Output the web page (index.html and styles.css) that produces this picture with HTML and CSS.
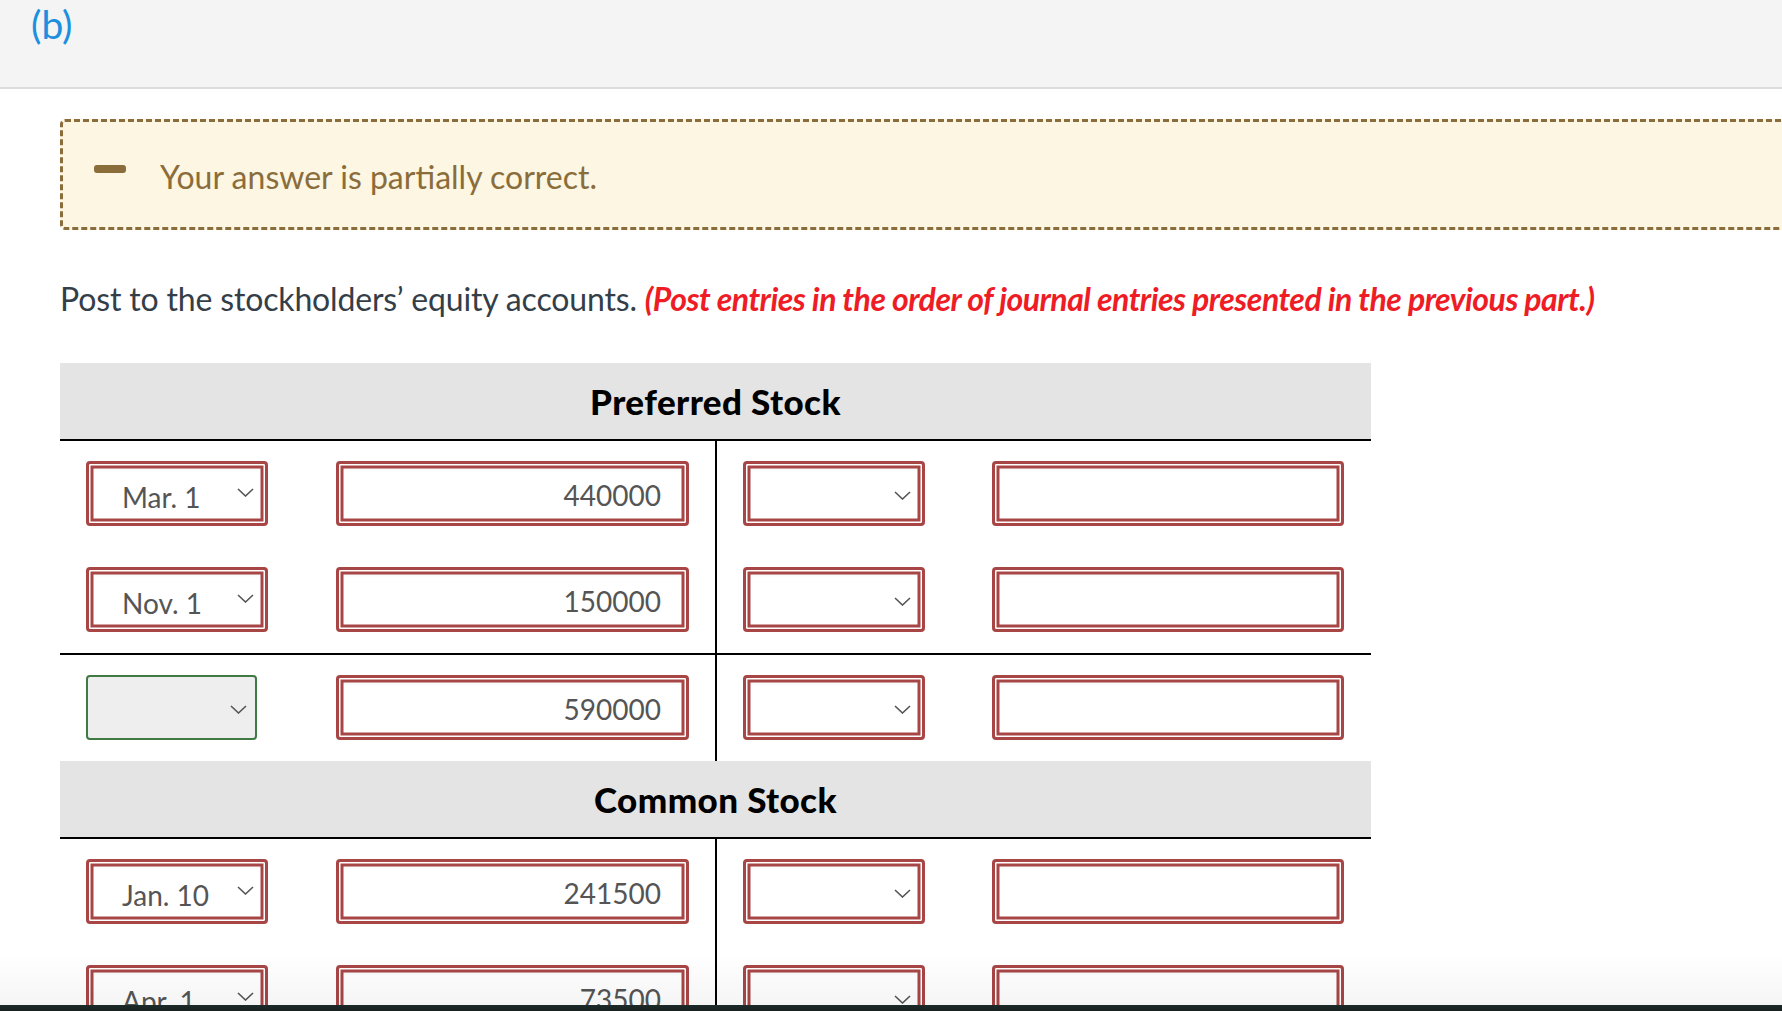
FILE: index.html
```html
<!DOCTYPE html>
<html lang="en">
<head>
<meta charset="utf-8">
<title>Part (b)</title>
<link rel="stylesheet" href="styles.css">
</head>
<body>
<header class="topbar"><span class="part-label">(b)</span></header>
<main class="content">
  <div class="alert">
    <span class="alert-icon"></span>
    <span class="alert-text">Your answer is partially correct.</span>
  </div>
  <p class="instruction">Post to the stockholders’ equity accounts. <em class="note">(Post entries in the order of journal entries presented in the previous part.)</em></p>

  <section class="account">
    <div class="acc-head">Preferred Stock</div>
    <div class="acc-row">
      <div class="half half-left">
        <div class="field select wrong"><span class="sel-text">Mar. 1</span><svg class="chev" viewBox="0 0 17 9"><path d="M1 1l7.5 7 7.5-7"/></svg></div>
        <input class="field amount wrong" value="440000">
      </div>
      <div class="half">
        <div class="field select wrong"><span class="sel-text"></span><svg class="chev" viewBox="0 0 17 9"><path d="M1 1l7.5 7 7.5-7"/></svg></div>
        <input class="field amount wide wrong" value="">
      </div>
    </div>
    <div class="acc-row">
      <div class="half half-left">
        <div class="field select wrong"><span class="sel-text">Nov. 1</span><svg class="chev" viewBox="0 0 17 9"><path d="M1 1l7.5 7 7.5-7"/></svg></div>
        <input class="field amount wrong" value="150000">
      </div>
      <div class="half">
        <div class="field select wrong"><span class="sel-text"></span><svg class="chev" viewBox="0 0 17 9"><path d="M1 1l7.5 7 7.5-7"/></svg></div>
        <input class="field amount wide wrong" value="">
      </div>
    </div>
    <div class="acc-row total">
      <div class="half half-left">
        <div class="field select ok"><span class="sel-text"></span><svg class="chev" viewBox="0 0 17 9"><path d="M1 1l7.5 7 7.5-7"/></svg></div>
        <input class="field amount wrong" value="590000">
      </div>
      <div class="half">
        <div class="field select wrong"><span class="sel-text"></span><svg class="chev" viewBox="0 0 17 9"><path d="M1 1l7.5 7 7.5-7"/></svg></div>
        <input class="field amount wide wrong" value="">
      </div>
    </div>
  </section>

  <section class="account">
    <div class="acc-head">Common Stock</div>
    <div class="acc-row">
      <div class="half half-left">
        <div class="field select wrong"><span class="sel-text">Jan. 10</span><svg class="chev" viewBox="0 0 17 9"><path d="M1 1l7.5 7 7.5-7"/></svg></div>
        <input class="field amount wrong" value="241500">
      </div>
      <div class="half">
        <div class="field select wrong"><span class="sel-text"></span><svg class="chev" viewBox="0 0 17 9"><path d="M1 1l7.5 7 7.5-7"/></svg></div>
        <input class="field amount wide wrong" value="">
      </div>
    </div>
    <div class="acc-row">
      <div class="half half-left">
        <div class="field select wrong"><span class="sel-text">Apr. 1</span><svg class="chev" viewBox="0 0 17 9"><path d="M1 1l7.5 7 7.5-7"/></svg></div>
        <input class="field amount wrong" value="73500">
      </div>
      <div class="half">
        <div class="field select wrong"><span class="sel-text"></span><svg class="chev" viewBox="0 0 17 9"><path d="M1 1l7.5 7 7.5-7"/></svg></div>
        <input class="field amount wide wrong" value="">
      </div>
    </div>
  </section>
</main>
<div class="screen-edge"></div>
</body>
</html>
```

FILE: styles.css
```css
html, body {
  margin: 0;
  padding: 0;
  overflow: hidden;
  background: #fff;
}
body {
  font-family: Lato, "Open Sans", "Liberation Sans", sans-serif;
  color: #343e48;
}
.topbar {
  height: 87px;
  background: #f4f4f4;
  border-bottom: 2px solid #dcdcdc;
  padding-left: 31px;
  box-sizing: content-box;
}
.part-label {
  display: block;
  font-size: 39px;
  line-height: 48px;
  color: #1d8fdf;
}
.content {
  padding-left: 60px;
}
.alert {
  margin-top: 30px;
  margin-right: -20px;
  height: 105px;
  display: flex;
  align-items: center;
  background: #fcf6e2;
  border: 3px dashed #8a6d3b;
  border-radius: 5px;
  color: #8a6d3b;
}
.alert-icon {
  width: 32px;
  height: 8px;
  border-radius: 3px;
  background: #8a6d3b;
  margin-left: 31px;
  margin-right: 34px;
  margin-top: -11px;
}
.alert-text {
  font-size: 32px;
  margin-top: 3px;
}
.instruction {
  margin: 50px 0 0;
  font-size: 32px;
  line-height: 38px;
  letter-spacing: -0.16px;
}
.note {
  color: #ee1c25;
  font-weight: 700;
  font-style: italic;
  letter-spacing: -0.5px;
}
.account {
  width: 1311px;
}
.account:first-of-type {
  margin-top: 45px;
}
.acc-head {
  height: 76px;
  background: #e4e4e4;
  border-bottom: 2px solid #000;
  display: flex;
  align-items: center;
  justify-content: center;
  font-size: 35px;
  font-weight: 900;
  letter-spacing: 0.4px;
  color: #000;
}
.acc-row {
  display: flex;
}
.acc-row.total {
  border-top: 2px solid #000;
}
.half {
  width: 654px;
  box-sizing: border-box;
  padding: 20px 27px 21px 26px;
  display: flex;
  justify-content: space-between;
  align-items: center;
}
.half-left {
  width: 657px;
  padding-left: 26px;
  padding-right: 26px;
  border-right: 2px solid #000;
}
.field {
  box-sizing: border-box;
  height: 65px;
  background: #fff;
  border-radius: 4px;
  font-family: Lato, "Open Sans", "Liberation Sans", sans-serif;
  font-size: 28px;
  color: #555;
}
.wrong {
  border: 3px solid #a84646;
  box-shadow: inset 0 0 0 1.5px #fff, inset 0 0 0 4.5px #a84646, inset 0 7px 5px -3px rgba(0, 0, 0, 0.08);
}
.ok {
  border: 2px solid #3e7a42;
  background: #eeeeee;
  width: 171px !important;
  margin-right: 11px;
}
.select {
  width: 182px;
  display: flex;
  align-items: center;
  justify-content: space-between;
  padding: 7px 11px 0 33px;
}
.ok.select {
  padding-right: 8px;
  padding-top: 0;
}
.sel-text {
  white-space: nowrap;
}
.chev {
  width: 17px;
  height: 9px;
  margin-top: -10px;
  fill: none;
  stroke: #555;
  stroke-width: 1.6;
}
.ok .chev {
  margin-top: 3px;
}
.wrong.select .sel-text:empty + .chev {
  margin-top: -4px;
}
.amount {
  width: 353px;
  text-align: right;
  padding: 3px 25px 0 10px;
  outline: none;
}
.amount.wide {
  width: 352px;
}
.screen-edge {
  position: fixed;
  left: 0;
  right: 0;
  bottom: 0;
  height: 56px;
  pointer-events: none;
  background: linear-gradient(to bottom, rgba(0,0,0,0) 0, rgba(0,0,0,0.04) 50px, #1d2a2a 50px, #18211f 56px);
}
```
